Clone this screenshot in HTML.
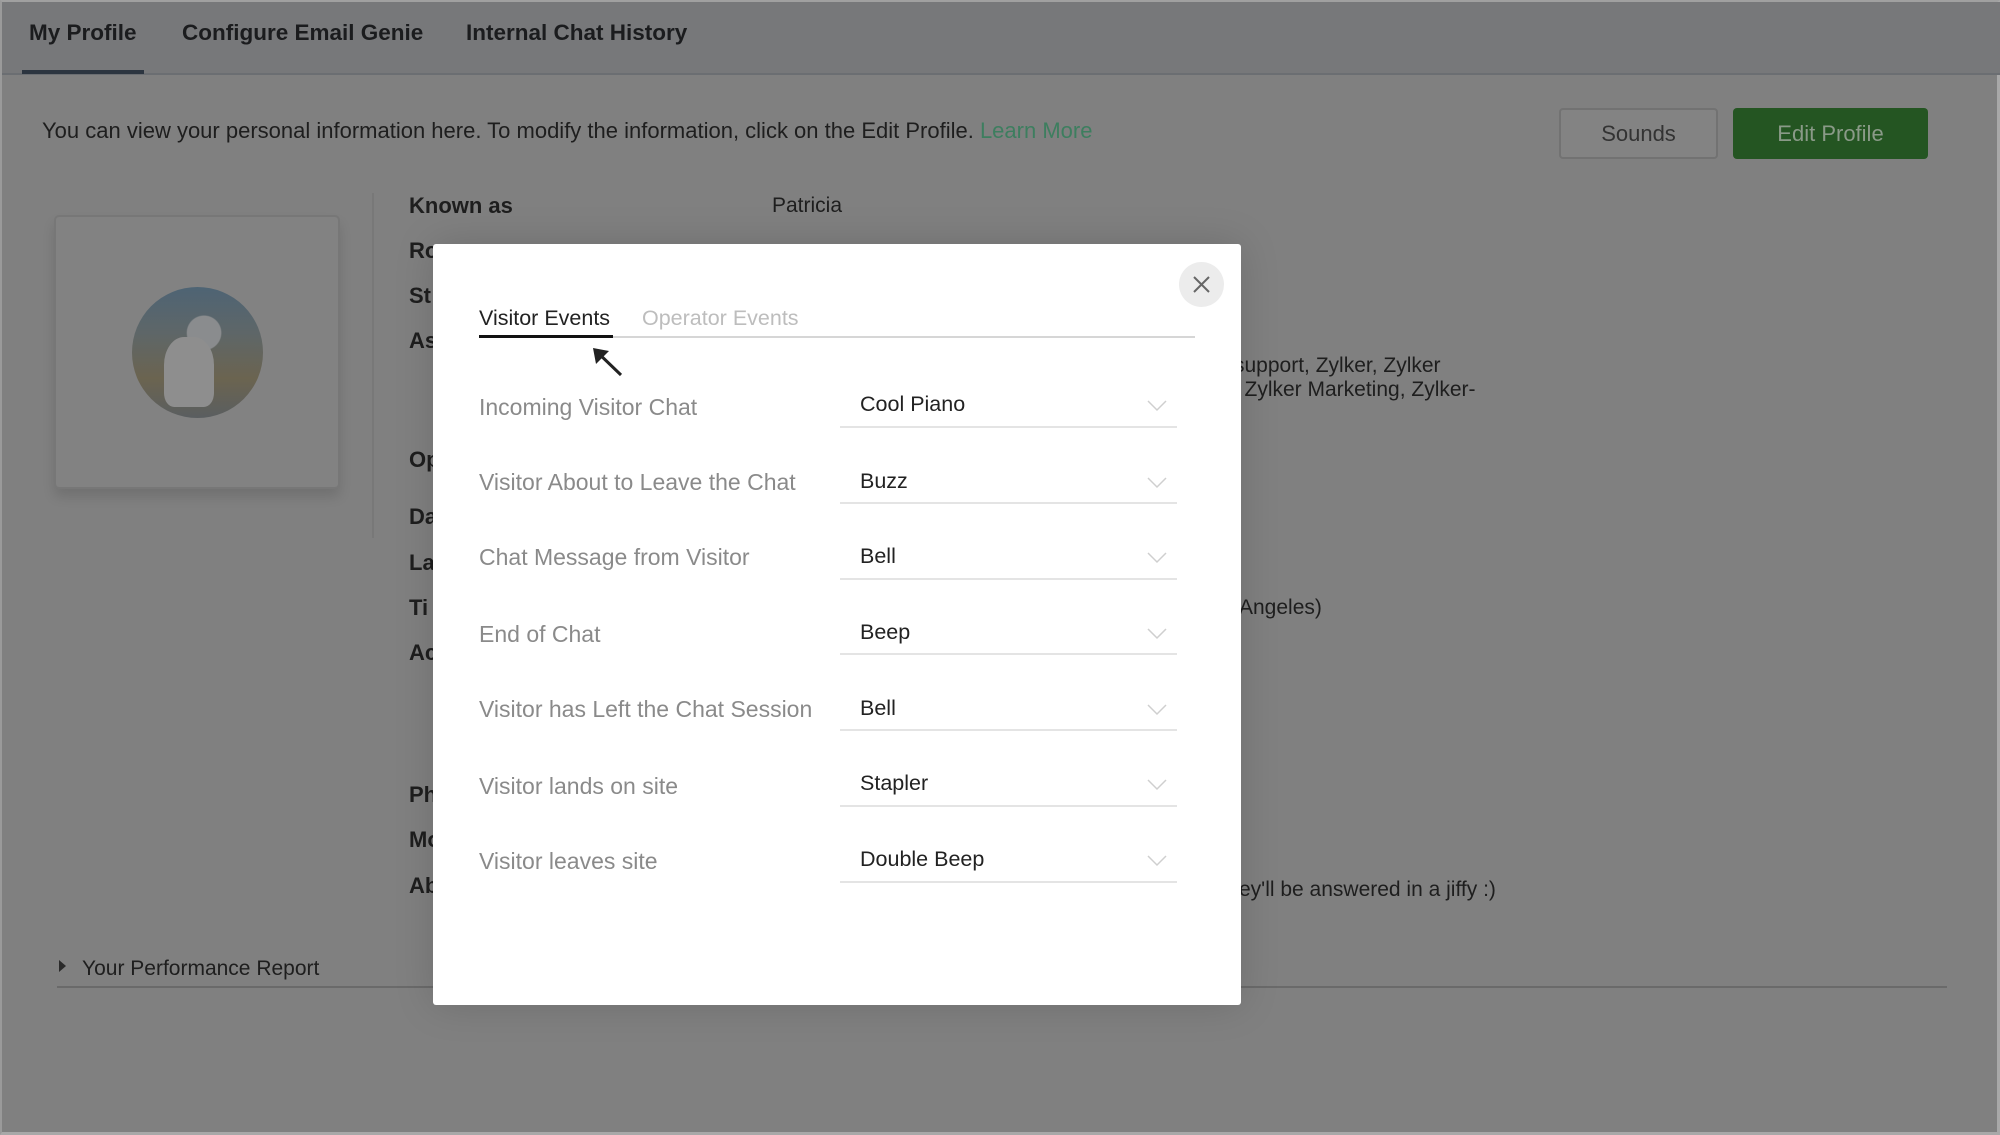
<!DOCTYPE html>
<html><head><meta charset="utf-8"><style>
*{box-sizing:border-box;margin:0;padding:0}
body{width:2000px;height:1135px;background:#808080;font-family:"Liberation Sans",sans-serif;position:relative;overflow:hidden;border-top:2px solid #a0a0a0;border-left:2px solid #9a9a9a;border-right:3px solid #a8a8a8;border-bottom:3px solid #a8a8a8}
.a{position:absolute;white-space:nowrap}
.hdr{position:absolute;left:0;top:0;width:2000px;height:73px;background:#77787a;border-bottom:2px solid #6b6e72}
.tab{font-size:22.5px;color:#1b1c1e;top:18px}
.bg{color:#1e1e1e;font-size:21px}
.lbl{font-size:22px;font-weight:bold;color:#1e1e1e;left:407px}
.modal{position:absolute;left:431px;top:242px;width:808px;height:761px;background:#fff;border-radius:3px;box-shadow:0 0 40px rgba(0,0,0,.15)}
.ml{position:absolute;left:46px;font-size:23px;color:#8a8a8a;white-space:nowrap}
.dd{position:absolute;left:407px;width:337px;height:2px;background:#e4e4e4}
.dv{position:absolute;left:427px;font-size:21.5px;color:#222;white-space:nowrap}
.chev{position:absolute;left:714px;width:20px;height:12px}
</style></head><body>
<div class="hdr"></div>
<div class="a tab" style="left:27px;font-weight:bold">My Profile</div>
<div class="a tab" style="left:180px;font-weight:bold">Configure Email Genie</div>
<div class="a tab" style="left:464px;font-weight:bold">Internal Chat History</div>
<div class="a" style="left:20px;top:68px;width:122px;height:4px;background:#2c3540"></div>

<div class="a bg" style="left:40px;top:116px;font-size:22px">You can view your personal information here. To modify the information, click on the Edit Profile. <span style="color:#3d7e5f">Learn More</span></div>
<div class="a" style="left:1557px;top:106px;width:159px;height:51px;border:2px solid #727272;border-radius:4px;background:#838383;color:#333;font-size:22px;text-align:center;line-height:47px">Sounds</div>
<div class="a" style="left:1731px;top:106px;width:195px;height:51px;border-radius:4px;background:#245522;color:#8a9a88;font-size:22px;text-align:center;line-height:51px">Edit Profile</div>

<div class="a" style="left:52px;top:213px;width:286px;height:274px;border:2px solid #777;border-radius:5px;background:#828282;box-shadow:0 8px 12px rgba(0,0,0,.12)"></div>
<div class="a" style="left:130px;top:285px;width:131px;height:131px;border-radius:50%;background:radial-gradient(circle at 55% 35%,#8a8c8e 0 15%,transparent 16%),linear-gradient(180deg,#4e6474 0%,#5e6668 35%,#6b6450 70%,#5a5e60 100%)"></div>
<div class="a" style="left:162px;top:335px;width:50px;height:70px;border-radius:40% 40% 20% 20%;background:#8e8e8e"></div>
<div class="a" style="left:370px;top:191px;width:2px;height:345px;background:#787878"></div>

<div class="a lbl" style="top:191px">Known as</div>
<div class="a bg" style="left:770px;top:192px;font-size:21px">Patricia</div>
<div class="a lbl" style="top:236px">Ro</div>
<div class="a lbl" style="top:281px">St</div>
<div class="a lbl" style="top:326px">As</div>
<div class="a lbl" style="top:445px">Op</div>
<div class="a lbl" style="top:502px">Da</div>
<div class="a lbl" style="top:548px">La</div>
<div class="a lbl" style="top:593px">Ti</div>
<div class="a lbl" style="top:638px">Ac</div>
<div class="a lbl" style="top:780px">Ph</div>
<div class="a lbl" style="top:825px">Mo</div>
<div class="a lbl" style="top:871px">Ab</div>
<div class="a bg" style="left:1232px;top:352px">support, Zylker, Zylker</div>
<div class="a bg" style="left:1225px;top:376px">:, Zylker Marketing, Zylker-</div>
<div class="a bg" style="left:1237px;top:594px">Angeles)</div>
<div class="a bg" style="left:1237px;top:876px">ey'll be answered in a jiffy :)</div>

<div class="a" style="left:57px;top:958px;width:0;height:0;border-left:7px solid #2a2a2a;border-top:6px solid transparent;border-bottom:6px solid transparent"></div>
<div class="a bg" style="left:80px;top:955px">Your Performance Report</div>
<div class="a" style="left:55px;top:984px;width:1890px;height:2px;background:#6a6a6a"></div>

<div class="modal">
  <div style="position:absolute;left:746px;top:18px;width:45px;height:45px;border-radius:50%;background:#ececec"></div>
  <svg style="position:absolute;left:759px;top:31px" width="19" height="19"><path d="M2 2L17 17M17 2L2 17" stroke="#666" stroke-width="2"/></svg>
  <div class="ml" style="top:62px;color:#222;font-size:21.5px">Visitor Events</div>
  <div class="ml" style="left:209px;top:62px;color:#bdbdbd;font-size:21.5px">Operator Events</div>
  <div style="position:absolute;left:46px;top:92px;width:716px;height:2px;background:#d6d6d6"></div>
  <div style="position:absolute;left:46px;top:91px;width:134px;height:3px;background:#111"></div>
  <svg style="position:absolute;left:158px;top:102px" width="36" height="34"><path d="M4 4L30 29" stroke="#222" stroke-width="3"/><path d="M2 2L18 5L5 18Z" fill="#222"/></svg>

  <div class="ml" style="top:150px">Incoming Visitor Chat</div>
  <div class="dv" style="top:148px">Cool Piano</div>
  <div class="dd" style="top:182px"></div>
  <div class="ml" style="top:225px">Visitor About to Leave the Chat</div>
  <div class="dv" style="top:225px">Buzz</div>
  <div class="dd" style="top:258px"></div>
  <div class="ml" style="top:300px">Chat Message from Visitor</div>
  <div class="dv" style="top:300px">Bell</div>
  <div class="dd" style="top:334px"></div>
  <div class="ml" style="top:377px">End of Chat</div>
  <div class="dv" style="top:376px">Beep</div>
  <div class="dd" style="top:409px"></div>
  <div class="ml" style="top:452px">Visitor has Left the Chat Session</div>
  <div class="dv" style="top:452px">Bell</div>
  <div class="dd" style="top:485px"></div>
  <div class="ml" style="top:529px">Visitor lands on site</div>
  <div class="dv" style="top:527px">Stapler</div>
  <div class="dd" style="top:561px"></div>
  <div class="ml" style="top:604px">Visitor leaves site</div>
  <div class="dv" style="top:603px">Double Beep</div>
  <div class="dd" style="top:637px"></div>

  <svg class="chev" style="top:156px" viewBox="0 0 20 12"><path d="M1 1L10 10L19 1" fill="none" stroke="#cfcfcf" stroke-width="1.5"/></svg>
  <svg class="chev" style="top:233px" viewBox="0 0 20 12"><path d="M1 1L10 10L19 1" fill="none" stroke="#cfcfcf" stroke-width="1.5"/></svg>
  <svg class="chev" style="top:308px" viewBox="0 0 20 12"><path d="M1 1L10 10L19 1" fill="none" stroke="#cfcfcf" stroke-width="1.5"/></svg>
  <svg class="chev" style="top:384px" viewBox="0 0 20 12"><path d="M1 1L10 10L19 1" fill="none" stroke="#cfcfcf" stroke-width="1.5"/></svg>
  <svg class="chev" style="top:460px" viewBox="0 0 20 12"><path d="M1 1L10 10L19 1" fill="none" stroke="#cfcfcf" stroke-width="1.5"/></svg>
  <svg class="chev" style="top:535px" viewBox="0 0 20 12"><path d="M1 1L10 10L19 1" fill="none" stroke="#cfcfcf" stroke-width="1.5"/></svg>
  <svg class="chev" style="top:611px" viewBox="0 0 20 12"><path d="M1 1L10 10L19 1" fill="none" stroke="#cfcfcf" stroke-width="1.5"/></svg>
</div>
</body></html>
